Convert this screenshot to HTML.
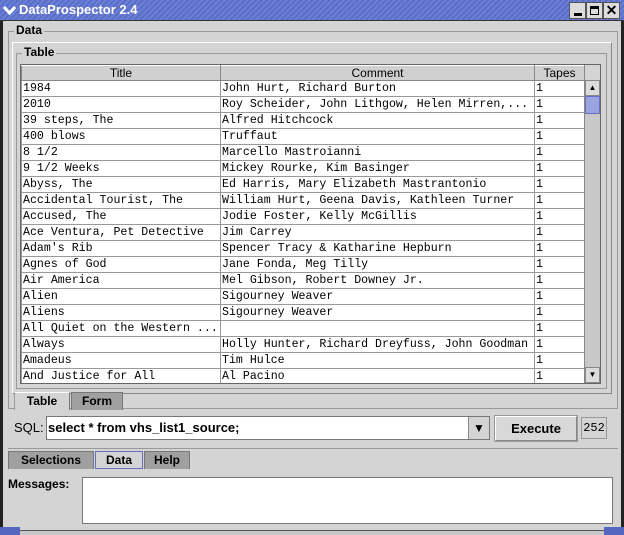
<!DOCTYPE html><html><head><style>
*{box-sizing:border-box;margin:0;padding:0}
body{width:624px;height:535px;background:#d4d4d4;font-family:"Liberation Sans",sans-serif;position:relative;overflow:hidden}
.a{position:absolute}
.title{left:0;top:0;width:624px;height:21px;background:repeating-linear-gradient(135deg,#5a6ec8 0 2px,#6b7fd6 2px 4px);border-bottom:1px solid #333}
.title span{position:absolute;left:19px;top:2px;color:#fff;font-weight:bold;font-size:13px}
.wb{top:2px;width:17px;height:17px;background:#dcdcdc;border:1px solid #555}
.lbl{font-weight:bold;font-size:12px;background:#d4d4d4;padding:0 2px}
table{border-collapse:collapse;font-family:"Liberation Mono",monospace;font-size:11.6px}
td{height:16px;border:1px solid #999;border-top:none;padding:0 1px;white-space:nowrap;overflow:hidden;background:#fff;line-height:15px}
th{height:15px;font-weight:normal;font-family:"Liberation Sans",sans-serif;font-size:12px;background:#d0d0d0;border:1px solid #888;border-top:1px solid #fff}
.tab{height:18px;font-weight:bold;font-size:12px;text-align:center;line-height:17px;border:1px solid #777;border-bottom:none}
</style></head><body>
<div class="a" style="left:0;top:0;width:3px;height:535px;background:#222"></div>
<div class="a" style="right:0;top:0;width:3px;height:535px;background:#222"></div>
<div class="a title"><svg class="a" style="left:3px;top:4px" width="13" height="12"><path d="M1 3 L6.5 9 L12 3" stroke="#fff" stroke-width="3" fill="none"/></svg><span>DataProspector 2.4</span></div>
<div class="a wb" style="left:569px"><div class="a" style="left:4px;top:10px;width:8px;height:3px;background:#000"></div></div>
<div class="a wb" style="left:586px"><div class="a" style="left:3px;top:3px;width:9px;height:9px;border:1px solid #000;border-top:3px solid #000"></div></div>
<div class="a wb" style="left:603px;font-weight:bold;font-size:14px;text-align:center;line-height:15px">✕</div>
<div class="a" style="left:8px;top:31px;width:610px;height:378px;border:1px solid #999"></div>
<div class="a lbl" style="left:14px;top:23px">Data</div>
<div class="a" style="left:12px;top:42px;width:600px;height:352px;border:1px solid #fff;border-right-color:#888;border-bottom-color:#888"></div>
<div class="a" style="left:16px;top:53px;width:591px;height:336px;border:1px solid #999"></div>
<div class="a lbl" style="left:22px;top:45px">Table</div>
<div class="a" style="left:20px;top:64px;width:581px;height:320px;border:1px solid #666;background:#d4d4d4;overflow:hidden">
<table style="width:563px;table-layout:fixed">
<colgroup><col style="width:199px"><col style="width:314px"><col style="width:50px"></colgroup>
<tr><th>Title</th><th>Comment</th><th>Tapes</th></tr>
<tr><td>1984</td><td>John Hurt, Richard Burton</td><td>1</td></tr>
<tr><td>2010</td><td>Roy Scheider, John Lithgow, Helen Mirren,...</td><td>1</td></tr>
<tr><td>39 steps, The</td><td>Alfred Hitchcock</td><td>1</td></tr>
<tr><td>400 blows</td><td>Truffaut</td><td>1</td></tr>
<tr><td>8 1/2</td><td>Marcello Mastroianni</td><td>1</td></tr>
<tr><td>9 1/2 Weeks</td><td>Mickey Rourke, Kim Basinger</td><td>1</td></tr>
<tr><td>Abyss, The</td><td>Ed Harris, Mary Elizabeth Mastrantonio</td><td>1</td></tr>
<tr><td>Accidental Tourist, The</td><td>William Hurt, Geena Davis, Kathleen Turner</td><td>1</td></tr>
<tr><td>Accused, The</td><td>Jodie Foster, Kelly McGillis</td><td>1</td></tr>
<tr><td>Ace Ventura, Pet Detective</td><td>Jim Carrey</td><td>1</td></tr>
<tr><td>Adam's Rib</td><td>Spencer Tracy &amp; Katharine Hepburn</td><td>1</td></tr>
<tr><td>Agnes of God</td><td>Jane Fonda, Meg Tilly</td><td>1</td></tr>
<tr><td>Air America</td><td>Mel Gibson, Robert Downey Jr.</td><td>1</td></tr>
<tr><td>Alien</td><td>Sigourney Weaver</td><td>1</td></tr>
<tr><td>Aliens</td><td>Sigourney Weaver</td><td>1</td></tr>
<tr><td>All Quiet on the Western ...</td><td></td><td>1</td></tr>
<tr><td>Always</td><td>Holly Hunter, Richard Dreyfuss, John Goodman</td><td>1</td></tr>
<tr><td>Amadeus</td><td>Tim Hulce</td><td>1</td></tr>
<tr><td>And Justice for All</td><td>Al Pacino</td><td>1</td></tr>
</table>
<div class="a" style="left:563px;top:15px;width:16px;height:303px;background:#c8c8c8;border-left:1px solid #888"></div>
<div class="a" style="left:564px;top:15px;width:15px;height:16px;background:#dcdcdc;border:1px solid #888;text-align:center;font-size:8px;line-height:14px">▲</div>
<div class="a" style="left:564px;top:31px;width:15px;height:18px;background:#9aa4e0;border:1px solid #6670c0"></div>
<div class="a" style="left:564px;top:302px;width:15px;height:16px;background:#dcdcdc;border:1px solid #888;text-align:center;font-size:8px;line-height:14px">▼</div>
</div>
<div class="a tab" style="left:14px;top:392px;width:56px;background:#d4d4d4;border-color:#fff #777 #777 #999">Table</div>
<div class="a tab" style="left:71px;top:392px;width:52px;background:#a0a0a0">Form</div>
<div class="a" style="left:14px;top:420px;font-size:13px">SQL:</div>
<div class="a" style="left:46px;top:416px;width:444px;height:24px;background:#fff;border:1px solid #777"></div>
<div class="a" style="left:48px;top:420px;font-size:13px;font-weight:bold">select * from vhs_list1_source;</div>
<div class="a" style="left:468px;top:417px;width:21px;height:22px;background:#d4d4d4;border-left:1px solid #888;text-align:center;font-size:12px;line-height:22px">▼</div>
<div class="a" style="left:495px;top:416px;width:82px;height:25px;background:#d8d8d8;border:1px solid #888;border-top-color:#fff;border-left-color:#fff;font-weight:bold;font-size:13px;text-align:center;line-height:23px;outline:1px solid #999">Execute</div>
<div class="a" style="left:581px;top:417px;width:26px;height:22px;border:1px solid #999;font-family:'Liberation Mono',monospace;font-size:12px;text-align:center;line-height:20px">252</div>
<div class="a" style="left:8px;top:448px;width:610px;height:1px;background:#999"></div>
<div class="a tab" style="left:8px;top:451px;width:86px;background:#a0a0a0">Selections</div>
<div class="a tab" style="left:95px;top:451px;width:48px;background:#d4d4d4;border:1px solid #6670c0">Data</div>
<div class="a tab" style="left:144px;top:451px;width:46px;background:#a0a0a0">Help</div>
<div class="a" style="left:8px;top:477px;font-size:12px;font-weight:bold">Messages:</div>
<div class="a" style="left:82px;top:477px;width:531px;height:47px;background:#fff;border:1px solid #777"></div>
<div class="a" style="left:3px;top:530px;width:618px;height:5px;background:#c8c8c8;border-top:1px solid #555"></div>
<div class="a" style="left:0;top:527px;width:20px;height:8px;background:#5566c0"></div>
<div class="a" style="right:0;top:527px;width:20px;height:8px;background:#5566c0"></div>
</body></html>
